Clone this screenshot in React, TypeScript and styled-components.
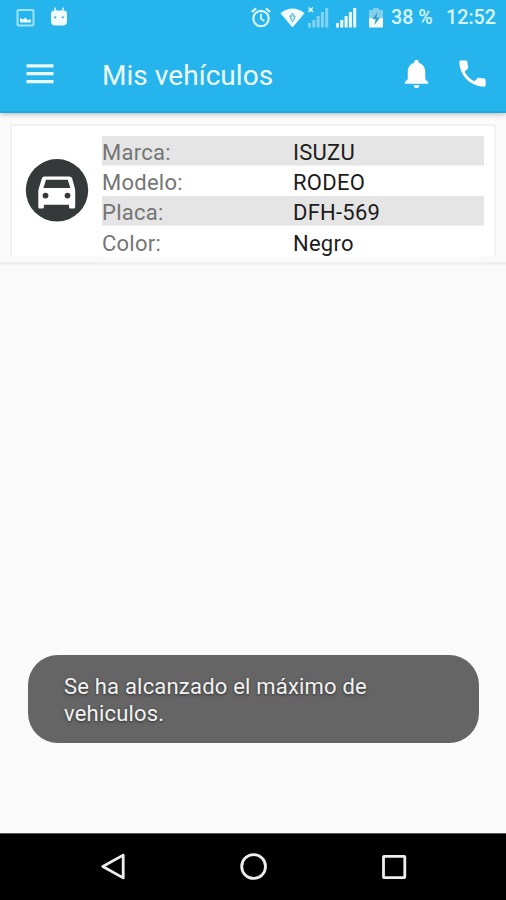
import React from 'react';
import styled, { createGlobalStyle } from 'styled-components';

const GlobalStyle = createGlobalStyle`
  * { box-sizing: border-box; }
  body { margin: 0; background: #fafafa; font-family: Roboto, sans-serif; }
  svg { display: block; flex: none; overflow: visible; }
`;

const Screen = styled.div`
  position: relative;
  width: 506px;
  height: 900px;
  display: flex;
  flex-direction: column;
  overflow: hidden;
  background: #fafafa;
`;

const Header = styled.header`
  height: 113px;
  flex: none;
  color: #fff;
  background: #26b4ec;
  border-bottom: 2px solid #18a8e2;
  box-shadow: 0 1px 5px rgba(0, 0, 0, 0.28);
  z-index: 1;
`;

const StatusBar = styled.div`
  height: 37px;
  display: flex;
  align-items: center;
  padding: 0 11px 2px 16px;
  color: #d9f4fe;
`;

const StatusGroup = styled.div<{ $gap: number }>`
  display: flex;
  align-items: center;
  gap: ${({ $gap }) => $gap}px;
`;

const Spacer = styled.div`
  flex: 1;
`;

const BatterySlot = styled.div`
  margin-left: 12px;
`;

const StatusText = styled.span<{ $left: number; $width: number }>`
  margin-left: ${({ $left }) => $left}px;
  width: ${({ $width }) => $width}px;
  padding-top: 1px;
  font-size: 19.7px;
  font-weight: 500;
  line-height: 34px;
  white-space: nowrap;
`;

const Toolbar = styled.div`
  height: 74px;
  display: flex;
  align-items: center;
  padding: 0 16px 1px 22px;
`;

const IconButton = styled.button`
  display: flex;
  padding: 0;
  border: 0;
  background: none;
  color: inherit;
`;

const Title = styled.h1`
  margin: 4px 0 0 44px;
  flex: 1;
  font-size: 28px;
  line-height: 36px;
  font-weight: 400;
  letter-spacing: 0.05px;
  color: #effaff;
`;

const Actions = styled.div`
  display: flex;
  gap: 21px;
`;

const Content = styled.main`
  flex: 1;
`;

const ListItem = styled.section`
  height: 152px;
  padding: 11px 10px 0;
  border-bottom: 3px solid #f0f0f0;
`;

const Card = styled.article`
  height: 132px;
  display: flex;
  padding: 10px 10px 0 13px;
  background: #fff;
  border: 2px solid #f2f2f2;
  border-bottom: 0;
`;

const Avatar = styled.div`
  width: 64px;
  margin: 22px 13px 0 0;
`;

const Details = styled.dl`
  flex: 1;
  margin: 0;
`;

const Row = styled.div<{ $shaded: boolean }>`
  height: 30.2px;
  display: grid;
  grid-template-columns: 191px 1fr;
  font-size: 22px;
  letter-spacing: 0.25px;
  line-height: 33px;
  background: linear-gradient(${({ $shaded }) => ($shaded ? '#e5e5e5, #e5e5e5' : '#fff, #fff')}) no-repeat 0 0 / 100% 29.6px;
`;

const Label = styled.dt`
  color: #757575;
`;

const Value = styled.dd`
  margin: 0;
  color: #1c1c1c;
`;

const Toast = styled.div`
  position: absolute;
  left: 28px;
  top: 655px;
  width: 451px;
  height: 88px;
  padding: 19px 70px 0 36px;
  border-radius: 30px;
  background: #656565;
  color: #f2f2f2;
  font-size: 22px;
  letter-spacing: 0.2px;
  line-height: 26.5px;
  text-shadow: 0 1px 3px rgba(0, 0, 0, 0.55);
`;

const NavBar = styled.nav`
  height: 67px;
  flex: none;
  display: flex;
  justify-content: space-between;
  padding: 19px 98px 0 99px;
  background: #000;
  border-top: 1px solid #555;
  color: #eee;
`;

const PictureIcon = () => (
  <svg width="19" height="18" viewBox="0 0 19 18">
    <rect x="1.5" y="1" width="16" height="15.5" rx="1" fill="none" stroke="#9fe3fb" strokeWidth="2" />
    <path d="M4 13.5V9l3 1.5 2.5-2 2 2.5 3.5-.8v3.3z" fill="#e9faff" />
  </svg>
);

const RobotIcon = () => (
  <svg width="18" height="20" viewBox="0 1.5 18 20">
    <path d="M4.5 1l1.4 4M13.5 1l-1.4 4" stroke="#e4f8ff" strokeWidth="1.4" />
    <path d="M1 7q0-3 3.5-3h9Q17 4 17 7v8q0 4-4 4H5q-4 0-4-4z" fill="#effbff" />
    <circle cx="5.2" cy="10.8" r="1.1" fill="#54a9c7" />
    <circle cx="12.8" cy="10.8" r="1.1" fill="#54a9c7" />
  </svg>
);

const AlarmIcon = () => (
  <svg width="20" height="21" viewBox="0 0 20 21" fill="none" stroke="currentColor" strokeWidth="2.2">
    <circle cx="10" cy="11.5" r="7.7" />
    <path d="M10 6.8v5l3.4 2.2" strokeWidth="1.8" />
    <path d="M.8 5l4.3-3.7M19.2 5l-4.3-3.7" />
  </svg>
);

const WifiIcon = () => (
  <svg width="25" height="20" viewBox="0 0 25 20">
    <path d="M.5 5.2Q12.5-4 24.5 5.2L12.5 19.5z" fill="#f1fbff" />
    <path d="M12.5 4.5l3.3 4.2-3.3 6-3.3-6z" fill="#71bfd9" />
    <path d="M12.5 7v5M11 9.5h3" stroke="#e4f8ff" strokeWidth="1" />
  </svg>
);

const SignalIcon = ({ offline = false }: { offline?: boolean }) => (
  <svg width="21" height="20" viewBox="0 0 21 20">
    <g fill={offline ? '#82d3f4' : '#f0fbff'}>
      <rect x="0" y="15" width="3" height="4.5" />
      <rect x="4.3" y="12" width="3" height="7.5" />
      <rect x="8.6" y="8" width="3" height="11.5" />
      <rect x="12.9" y="4" width="3" height="15.5" />
      <rect x="17.2" y="0" width="3" height="19.5" />
    </g>
    {offline && <path d="M.5 -.5l4.4 4.4M4.9-.5L.5 3.9" stroke="#dff5fd" strokeWidth="1.5" />}
  </svg>
);

const BatteryIcon = () => (
  <svg width="14" height="20" viewBox="0 0 14 20">
    <path d="M4 0h6v2h4v8H0V2h4z" fill="#83d0ec" />
    <path d="M0 10h14v9.5H0z" fill="#f2fcff" />
    <path d="M8.7 4L3.2 11.3h3.4L5.5 17l5.6-7.5H7.4z" fill="#329fc8" />
  </svg>
);

const MenuIcon = () => (
  <svg width="36" height="36" viewBox="0 0 36 36" fill="#e9f9ff">
    <path d="M4.5 8.2h27v3.200h-27zM4.500 16.100h27v3.200h-27zM4.500 24h27v3.200h-27z" />
  </svg>
);

const BellIcon = () => (
  <svg width="35" height="35" viewBox="0 0 24 24" fill="#fff">
    <path d="M12 22c1.1 0 2-.9 2-2h-4c0 1.1.9 2 2 2zm6-6v-5c0-3.07-1.63-5.64-4.5-6.32V4c0-.83-.67-1.5-1.5-1.5s-1.5.67-1.5 1.5v.68C7.64 5.36 6 7.92 6 11v5l-2 2v1h16v-1z" />
  </svg>
);

const PhoneIcon = () => (
  <svg width="35" height="35" viewBox="0 0 24 24" fill="#fff">
    <path d="M6.62 10.79c1.44 2.83 3.76 5.14 6.59 6.59l2.2-2.2c.27-.27.67-.36 1.02-.24 1.12.37 2.33.57 3.57.57.55 0 1 .45 1 1V20c0 .55-.45 1-1 1C10.61 21 3 13.39 3 4c0-.55.45-1 1-1h3.5c.55 0 1 .45 1 1 0 1.25.2 2.45.57 3.57.11.35.03.74-.25 1.02z" />
  </svg>
);

const CarIcon = () => (
  <svg width="64" height="64" viewBox="0 0 64 64">
    <circle cx="32" cy="32.3" r="31.2" fill="#35393a" />
    <g transform="translate(-.3 .9)">
      <path
        fill="#fff"
        fillRule="evenodd"
        d="M19.5 17.5h25q2.3 0 3 2l2.700 10q.3 1.500.3 3V48q0 1.600-1.600 1.600h-3q-1.600 0-1.600-1.600v-2.200H19.200V48q0 1.600-1.600 1.600h-2.600Q13.600 49.600 13.600 48V32.500q0-1.500.5-3l3-10q.7-2 2.400-2zM21.300 20.800l-2.600 8.400h27l-2.700-8.400z"
      />
      <circle cx="20.800" cy="36.700" r="2.900" fill="#35393a" />
      <circle cx="42.800" cy="36.700" r="2.900" fill="#35393a" />
    </g>
  </svg>
);

const NavIcon = ({ kind }: { kind: 'back' | 'home' | 'recent' }) => (
  <svg width="28" height="28" viewBox="0 0 28 28" fill="none" stroke="currentColor" strokeWidth="2.8" strokeLinejoin="round">
    {kind === 'back' && <path d="M24.200 2.100v22.800L3.800 13.500z" />}
    {kind === 'home' && <circle cx="13.600" cy="13.500" r="11.900" />}
    {kind === 'recent' && <rect x="3.500" y="3.300" width="21.300" height="21.300" rx="0.500" />}
  </svg>
);

const vehicle = [
  { label: 'Marca:', value: 'ISUZU' },
  { label: 'Modelo:', value: 'RODEO' },
  { label: 'Placa:', value: 'DFH-569' },
  { label: 'Color:', value: 'Negro' },
];

export default function App() {
  return (
    <Screen>
      <GlobalStyle />
      <Header>
        <StatusBar>
          <StatusGroup $gap={15}>
            <PictureIcon />
            <RobotIcon />
          </StatusGroup>
          <Spacer />
          <StatusGroup $gap={9}>
            <AlarmIcon />
            <StatusGroup $gap={3}>
              <WifiIcon />
              <StatusGroup $gap={7}>
                <SignalIcon offline />
                <SignalIcon />
              </StatusGroup>
            </StatusGroup>
          </StatusGroup>
          <BatterySlot><BatteryIcon /></BatterySlot>
          <StatusText $left={8} $width={46}>38 %</StatusText>
          <StatusText $left={9} $width={49}>12:52</StatusText>
        </StatusBar>
        <Toolbar>
          <IconButton aria-label="Menú"><MenuIcon /></IconButton>
          <Title>Mis vehículos</Title>
          <Actions>
            <IconButton aria-label="Notificaciones"><BellIcon /></IconButton>
            <IconButton aria-label="Llamar"><PhoneIcon /></IconButton>
          </Actions>
        </Toolbar>
      </Header>
      <Content>
        <ListItem>
          <Card>
            <Avatar><CarIcon /></Avatar>
            <Details>
              {vehicle.map(({ label, value }, index) => (
                <Row key={label} $shaded={index % 2 === 0}>
                  <Label>{label}</Label>
                  <Value>{value}</Value>
                </Row>
              ))}
            </Details>
          </Card>
        </ListItem>
      </Content>
      <NavBar>
        <IconButton aria-label="Atrás"><NavIcon kind="back" /></IconButton>
        <IconButton aria-label="Inicio"><NavIcon kind="home" /></IconButton>
        <IconButton aria-label="Recientes"><NavIcon kind="recent" /></IconButton>
      </NavBar>
      <Toast role="status">Se ha alcanzado el máximo de vehiculos.</Toast>
    </Screen>
  );
}
